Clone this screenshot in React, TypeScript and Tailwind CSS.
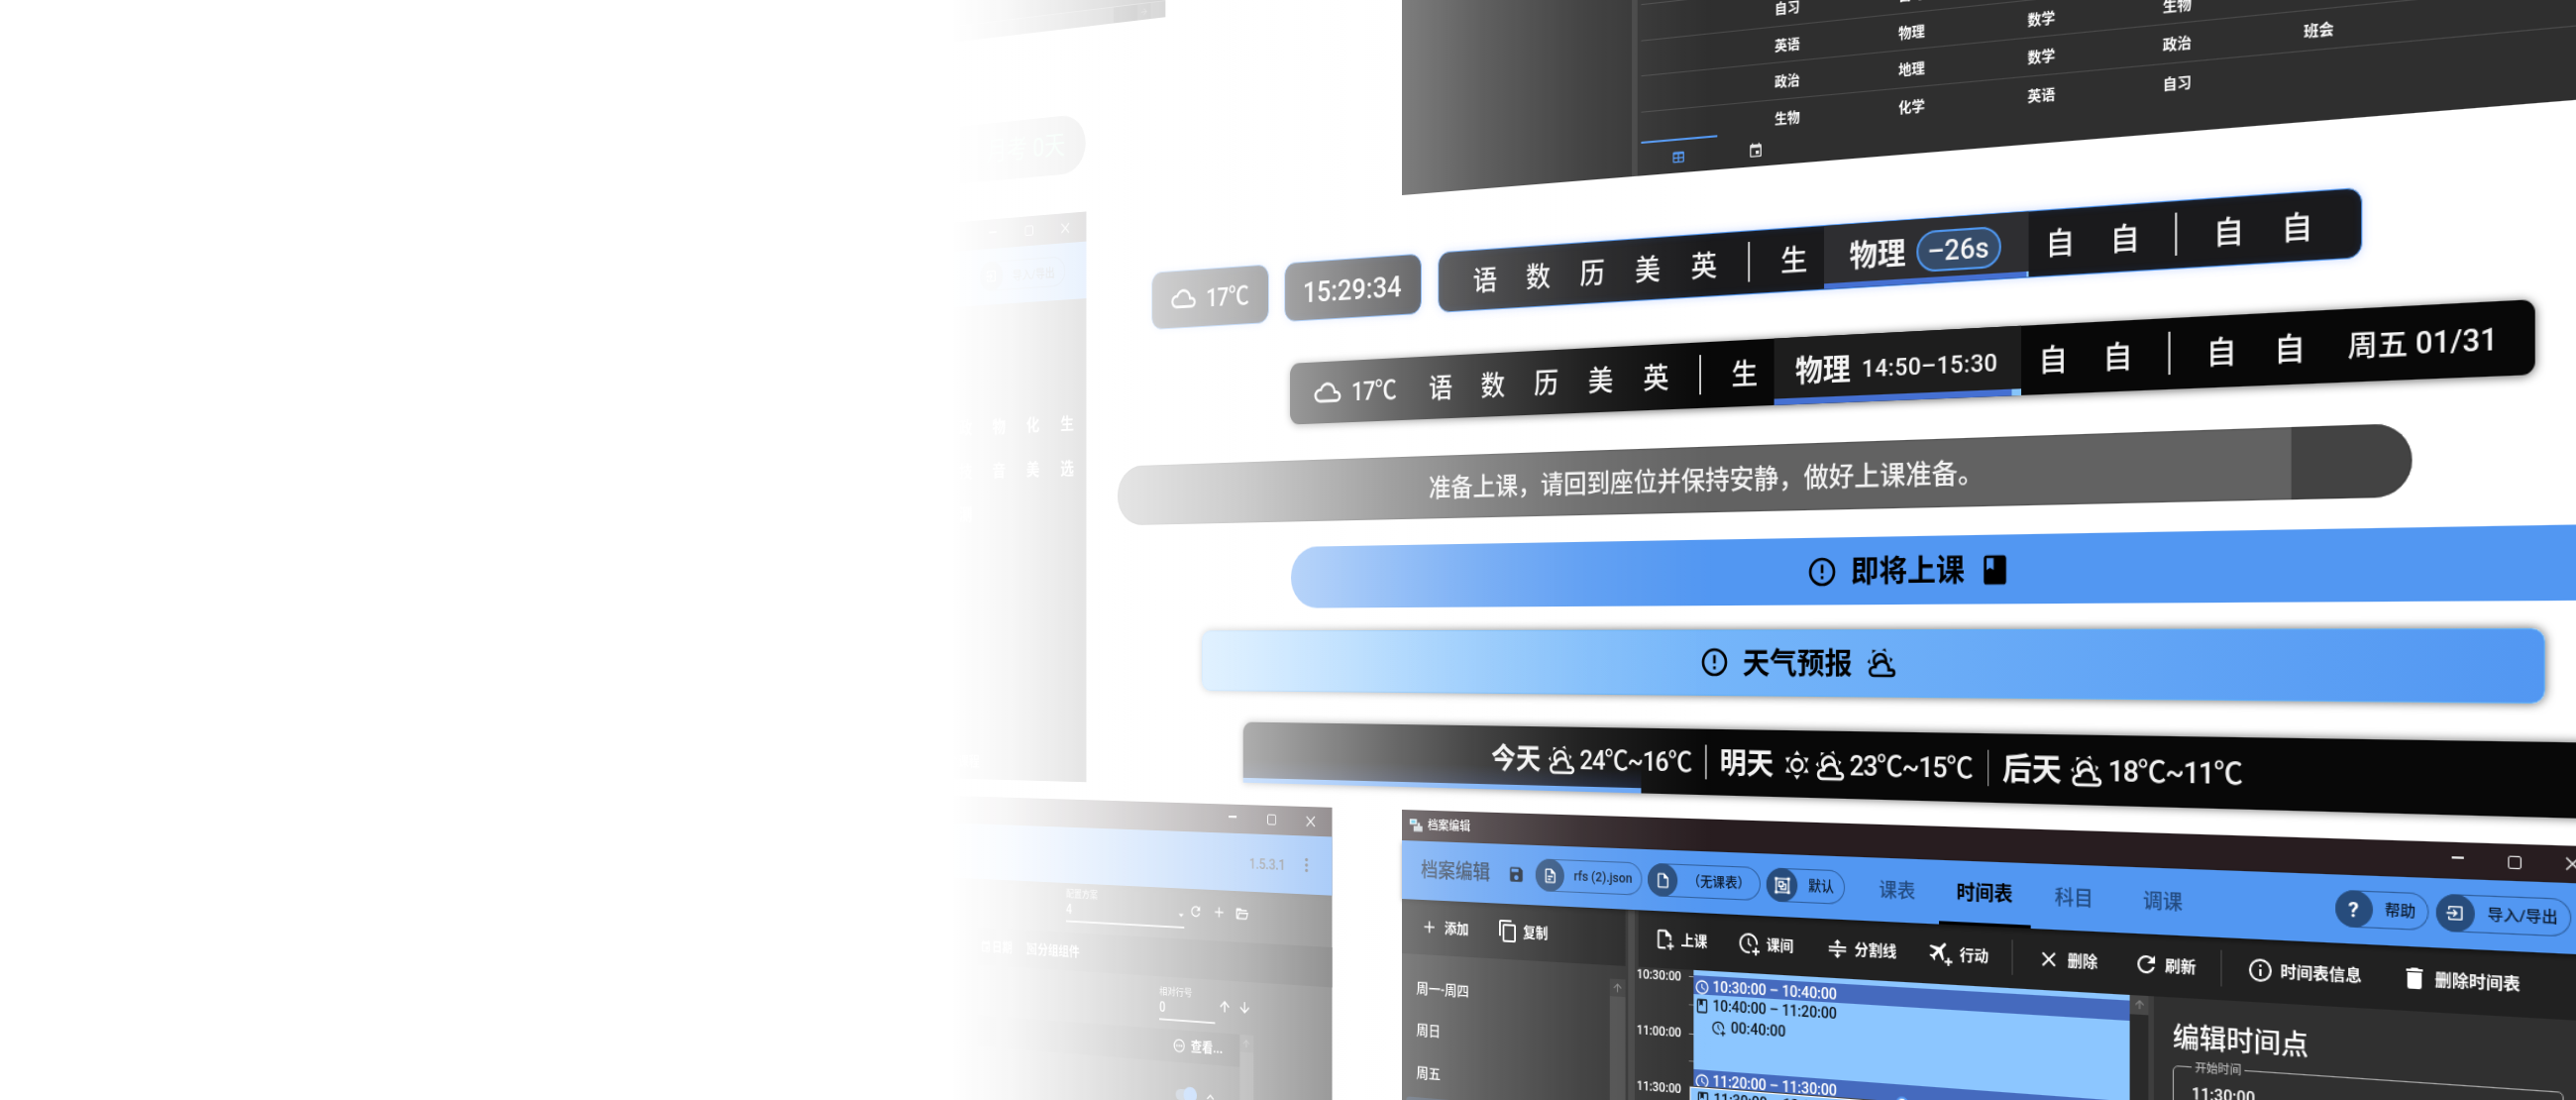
import type { ReactNode } from 'react';

/* ---------- icons ---------- */

const PATHS = {
  cloud:
    'M6,19A5,5 0 0,1 1,14A5,5 0 0,1 6,9C7,6.65 9.3,5 12,5C15.43,5 18.24,7.66 18.5,11.03L19,11A4,4 0 0,1 23,15A4,4 0 0,1 19,19H6M19,13H17V12A5,5 0 0,0 12,7C9.5,7 7.45,8.82 7.06,11.19C6.73,11.07 6.37,11 6,11A3,3 0 0,0 3,14A3,3 0 0,0 6,17H19A2,2 0 0,0 21,15A2,2 0 0,0 19,13Z',
  partly:
    'M12.74,5.47C15.1,6.5 16.35,9.03 15.92,11.46C17.19,12.56 18,14.19 18,16V16.17C18.31,16.06 18.65,16 19,16A3,3 0 0,1 22,19A3,3 0 0,1 19,22H6A4,4 0 0,1 2,18A4,4 0 0,1 6,14H6.27C5,12.45 4.6,10.24 5.5,8.26C6.72,5.5 9.97,4.24 12.74,5.47M11.93,7.3C10.16,6.5 8.09,7.31 7.31,9.07C6.85,10.09 6.93,11.22 7.41,12.13C8.5,10.83 10.16,10 12,10C12.7,10 13.38,10.12 14,10.34C13.94,9.06 13.18,7.86 11.93,7.3M13.55,3.64C13,3.4 12.45,3.23 11.88,3.12L14.37,1.82L15.27,4.71C14.76,4.29 14.19,3.93 13.55,3.64M6.09,4.44C5.6,4.79 5.17,5.19 4.8,5.63L4.91,2.82L7.87,3.5C7.25,3.71 6.65,4.03 6.09,4.44M18,9.71C17.91,9.12 17.78,8.55 17.59,8L19.97,9.5L17.92,11.73C18.03,11.08 18.05,10.4 18,9.71M3.04,11.3C3.11,11.9 3.24,12.47 3.43,13L1.06,11.5L3.1,9.28C3,9.93 2.97,10.61 3.04,11.3M19,18H16V16A4,4 0 0,0 12,12A4,4 0 0,0 8,16H6A2,2 0 0,0 4,18A2,2 0 0,0 6,20H19A1,1 0 0,0 20,19A1,1 0 0,0 19,18Z',
  sunny:
    'M12,7A5,5 0 0,1 17,12A5,5 0 0,1 12,17A5,5 0 0,1 7,12A5,5 0 0,1 12,7M12,9A3,3 0 0,0 9,12A3,3 0 0,0 12,15A3,3 0 0,0 15,12A3,3 0 0,0 12,9M12,2L14.39,5.42C13.65,5.15 12.84,5 12,5C11.16,5 10.35,5.15 9.61,5.42L12,2M3.34,7L7.5,6.65C6.9,7.16 6.36,7.78 5.94,8.5C5.5,9.24 5.25,10 5.11,10.79L3.34,7M3.36,17L5.12,13.23C5.26,14 5.53,14.78 5.95,15.5C6.37,16.24 6.91,16.86 7.5,17.37L3.36,17M20.65,7L18.88,10.79C18.74,10 18.47,9.23 18.05,8.5C17.63,7.78 17.1,7.15 16.5,6.64L20.65,7M20.64,17L16.5,17.36C17.09,16.85 17.62,16.22 18.04,15.5C18.46,14.77 18.73,14 18.87,13.21L20.64,17M12,22L9.59,18.56C10.33,18.83 11.14,19 12,19C12.82,19 13.63,18.83 14.37,18.56L12,22Z',
  alert:
    'M11,15H13V17H11V15M11,7H13V13H11V7M12,2C6.47,2 2,6.5 2,12A10,10 0 0,0 12,22A10,10 0 0,0 22,12A10,10 0 0,0 12,2M12,20A8,8 0 0,1 4,12A8,8 0 0,1 12,4A8,8 0 0,1 20,12A8,8 0 0,1 12,20Z',
  info: 'M11,9H13V7H11M12,20C7.59,20 4,16.41 4,12C4,7.59 7.59,4 12,4C16.41,4 20,7.59 20,12C20,16.41 16.41,20 12,20M12,2A10,10 0 0,0 2,12A10,10 0 0,0 12,22A10,10 0 0,0 22,12A10,10 0 0,0 12,2M11,17H13V11H11V17Z',
  book: 'M18,2H6C4.9,2 4,2.9 4,4V20C4,21.1 4.9,22 6,22H18C19.1,22 20,21.1 20,20V4C20,2.9 19.1,2 18,2M6,4H11V12L8.5,10.5L6,12V4Z',
  bookOutline:
    'M18,2A2,2 0 0,1 20,4V20A2,2 0 0,1 18,22H6A2,2 0 0,1 4,20V4A2,2 0 0,1 6,2H18M18,4H13V12L10.5,9.75L8,12V4H6V20H18V4Z',
  save: 'M15,9H5V5H15M12,19A3,3 0 0,1 9,16A3,3 0 0,1 12,13A3,3 0 0,1 15,16A3,3 0 0,1 12,19M17,3H5C3.89,3 3,3.9 3,5V19A2,2 0 0,0 5,21H19A2,2 0 0,0 21,19V7L17,3Z',
  fileDoc:
    'M6,2A2,2 0 0,0 4,4V20A2,2 0 0,0 6,22H18A2,2 0 0,0 20,20V8L14,2H6M6,4H13V9H18V20H6V4M8,12V14H16V12H8M8,16V18H13V16H8Z',
  file: 'M14,2H6A2,2 0 0,0 4,4V20A2,2 0 0,0 6,22H18A2,2 0 0,0 20,20V8L14,2M18,20H6V4H13V9H18V20Z',
  filePlus:
    'M23 18H20V15H18V18H15V20H18V23H20V20H23M6 2C4.89 2 4 2.9 4 4V20C4 21.11 4.89 22 6 22H13.81C13.45 21.38 13.2 20.7 13.08 20H6V4H13V9H18V13.08C18.33 13.03 18.67 13 19 13C19.34 13 19.67 13.03 20 13.08V8L14 2Z',
  group:
    'M1,1V5H2V19H1V23H5V22H19V23H23V19H22V5H23V1H19V2H5V1M5,4H19V5H20V19H19V20H5V19H4V5H5M6,6V14H9V18H18V9H14V6M8,8H12V12H8M14,11H16V16H11V14H14',
  plus: 'M19,13H13V19H11V13H5V11H11V5H13V11H19V13Z',
  copy: 'M19,21H8V7H19M19,5H8A2,2 0 0,0 6,7V21A2,2 0 0,0 8,23H19A2,2 0 0,0 21,21V7A2,2 0 0,0 19,5M16,1H4A2,2 0 0,0 2,3V17H4V3H16V1Z',
  split: 'M8,18H11V15H2V13H22V15H13V18H16L12,22L8,18M12,2L8,6H11V9H2V11H22V9H13V6H16L12,2Z',
  close:
    'M19,6.41L17.59,5L12,10.59L6.41,5L5,6.41L10.59,12L5,17.59L6.41,19L12,13.41L17.59,19L19,17.59L13.41,12L19,6.41Z',
  refresh:
    'M17.65,6.35C16.2,4.9 14.21,4 12,4A8,8 0 0,0 4,12A8,8 0 0,0 12,20C15.73,20 18.84,17.45 19.73,14H17.65C16.83,16.33 14.61,18 12,18A6,6 0 0,1 6,12A6,6 0 0,1 12,6C13.66,6 15.14,6.69 16.22,7.78L13,11H20V4L17.65,6.35Z',
  trash: 'M19,4H15.5L14.5,3H9.5L8.5,4H5V6H19M6,19A2,2 0 0,0 8,21H16A2,2 0 0,0 18,19V7H6V19Z',
  clock:
    'M12,20A8,8 0 0,0 20,12A8,8 0 0,0 12,4A8,8 0 0,0 4,12A8,8 0 0,0 12,20M12,2A10,10 0 0,1 22,12A10,10 0 0,1 12,22C6.47,22 2,17.5 2,12A10,10 0 0,1 12,2M12.5,7V12.25L17,14.92L16.25,16.15L11,13V7H12.5Z',
  folder:
    'M6.1,10L4,18V8H21A2,2 0 0,0 19,6H12L10,4H4A2,2 0 0,0 2,6V18A2,2 0 0,0 4,20H19C19.9,20 20.7,19.4 20.9,18.5L23.2,10H6.1M19,18H6L7.6,12H20.6L19,18Z',
  calendar:
    'M19,19H5V8H19M16,1V3H8V1H6V3H5C3.89,3 3,3.89 3,5V19A2,2 0 0,0 5,21H19A2,2 0 0,0 21,19V5C21,3.89 20.1,3 19,3H18V1M17,12H12V17H17V12Z',
  table:
    'M5,4H19A2,2 0 0,1 21,6V18A2,2 0 0,1 19,20H5A2,2 0 0,1 3,18V6A2,2 0 0,1 5,4M5,8V12H11V8H5M13,8V12H19V8H13M5,14V18H11V14H5M13,14V18H19V14H13Z',
  up: 'M13,20H11V8L5.5,13.5L4.08,12.08L12,4.16L19.92,12.08L18.5,13.5L13,8V20Z',
  down: 'M11,4H13V16L18.5,10.5L19.92,11.92L12,19.84L4.08,11.92L5.5,10.5L11,16V4Z',
  right: 'M4,11V13H16L10.5,18.5L11.92,19.92L19.84,12L11.92,4.08L10.5,5.5L16,11H4Z',
  dots: 'M12,16A2,2 0 0,1 14,18A2,2 0 0,1 12,20A2,2 0 0,1 10,18A2,2 0 0,1 12,16M12,10A2,2 0 0,1 14,12A2,2 0 0,1 12,14A2,2 0 0,1 10,12A2,2 0 0,1 12,10M12,4A2,2 0 0,1 14,6A2,2 0 0,1 12,8A2,2 0 0,1 10,6A2,2 0 0,1 12,4Z',
  more: 'M12,2A10,10 0 0,0 2,12A10,10 0 0,0 12,22A10,10 0 0,0 22,12A10,10 0 0,0 12,2M12,4A8,8 0 0,1 20,12A8,8 0 0,1 12,20A8,8 0 0,1 4,12A8,8 0 0,1 12,4M6.5,10.7H9.2V13.3H6.5M10.7,10.7H13.3V13.3H10.7M14.8,10.7H17.5V13.3H14.8Z',
  importBox:
    'M5,3H19A2,2 0 0,1 21,5V19A2,2 0 0,1 19,21H5A2,2 0 0,1 3,19V16H5V19H19V5H5V8H3V5A2,2 0 0,1 5,3M1,11H11.2L8.7,8.5L10.1,7.1L15,12L10.1,16.9L8.7,15.5L11.2,13H1Z',
  caret: 'M7,10L12,15L17,10H7Z',
  chevron: 'M7.41,15.41L12,10.83L16.59,15.41L18,14L12,8L6,14L7.41,15.41Z',
};

function Icon({ name, className = '' }: { name: keyof typeof PATHS; className?: string }) {
  return (
    <svg viewBox="0 0 24 24" fill="currentColor" fillRule="evenodd" className={`shrink-0 ${className}`}>
      <path d={PATHS[name]} />
    </svg>
  );
}

function ClockPlus({ className = '' }: { className?: string }) {
  return (
    <svg viewBox="0 0 24 24" fill="none" stroke="currentColor" strokeWidth="2" className={`shrink-0 ${className}`}>
      <path d="M12.5 20A9 9 0 1 1 20 12.2" />
      <path d="M11 6v5.6l3 2.2" strokeWidth="1.6" />
      <path d="M19 15v8M15 19h8" />
    </svg>
  );
}

function PlanePlus({ className = '' }: { className?: string }) {
  return (
    <svg viewBox="0 0 24 24" fill="currentColor" className={`shrink-0 ${className}`}>
      <path
        transform="translate(-2.5 -3) rotate(45 12 12)"
        d="M21 16v-2l-8-5V3.5c0-.83-.67-1.5-1.5-1.5S10 2.67 10 3.5V9l-8 5v2l8-2.5V19l-2 1.5V22l3.5-1 3.5 1v-1.5L13 19v-5.5l8 2.5z"
      />
      <path d="M23 18h-3v-3h-2v3h-3v2h3v3h2v-3h3z" />
    </svg>
  );
}

/* ---------- shared pieces ---------- */

function CaptionButtons({ cell }: { cell: string }) {
  return (
    <div className="flex h-full items-center text-[#e8e8e8]">
      <div className={`flex justify-center ${cell}`}>
        <span className="h-[1.5px] w-[10px] -translate-y-[2px] bg-current" />
      </div>
      <div className={`flex justify-center ${cell}`}>
        <span className="size-[11px] rounded-[2px] border-[1.5px] border-current" />
      </div>
      <div className={`flex justify-center ${cell}`}>
        <svg viewBox="0 0 12 12" className="size-[12px]" stroke="currentColor" strokeWidth="1.4">
          <path d="M1 1L11 11M11 1L1 11" />
        </svg>
      </div>
    </div>
  );
}

function Chip({ icon, width, children }: { icon: ReactNode; width: string; children: ReactNode }) {
  return (
    <div
      className={`flex h-8 shrink-0 items-center rounded-full text-[13px] font-medium text-[#0b1a2e] ring-1 ring-[#2f5f9e] ring-inset ${width}`}
    >
      <span className="flex size-8 shrink-0 items-center justify-center rounded-full bg-[#274c7c] text-white">{icon}</span>
      <span className="flex-1 text-center whitespace-nowrap">{children}</span>
    </div>
  );
}

function Subject({ children }: { children: string }) {
  return <span className="w-[60px] shrink-0 pt-[3px] text-center text-[27.5px] font-medium">{children}</span>;
}

function Rule() {
  return (
    <span className="flex w-[33.5px] shrink-0 justify-center">
      <span className="h-[38px] w-[2px] bg-[#cfcfcf]" />
    </span>
  );
}

function Subjects({ names }: { names: string }) {
  return (
    <>
      {names.split('').map((n, i) => (n === '|' ? <Rule key={i} /> : <Subject key={i}>{n}</Subject>))}
    </>
  );
}

const GLOW =
  'flex items-center bg-[#1a1a1c] text-[#f4f4f4] border-[1.5px] border-[#4f95ee] shadow-[0_0_9px_rgba(90,140,255,0.3),inset_0_0_7px_rgba(40,90,190,0.2)]';

/* ---------- islands ---------- */

function GlowIsland() {
  return (
    <div className="absolute top-[256.5px] left-[691.5px] flex h-[61px] gap-[19px]">
      <div className={`w-[148px] justify-center gap-[11px] rounded-[13px] ${GLOW}`}>
        <Icon name="cloud" className="size-[34px]" />
        <span className="pt-[2px] text-[26px] font-medium tracking-[-0.8px]">17℃</span>
      </div>
      <div className={`w-[164px] justify-center rounded-[13px] pt-[2px] text-[30px] font-medium ${GLOW}`}>15:29:34</div>
      <div className={`w-[917px] overflow-hidden rounded-[13px] pl-[23.5px] ${GLOW}`}>
        <Subjects names="语数历美英|生" />
        <div className="relative flex h-full w-[200px] shrink-0 items-center justify-center gap-[10px] bg-[#2e2e31]">
          <b className="pt-[3px] text-[28px] font-bold">物理</b>
          <span className="mt-[2px] flex h-[38px] w-[82px] items-center justify-center rounded-full border-2 border-[#4f96ee] bg-[#364c69] text-[26px] font-medium">
            –26s
          </span>
          <span className="absolute inset-x-0 bottom-0 h-[5px] border-r-2 border-[#8ac8ff] bg-[#4570d2]" />
        </div>
        <Subjects names="自自|自自" />
      </div>
    </div>
  );
}

function DarkIsland() {
  return (
    <div className="absolute top-[360.5px] left-[866px] flex h-[63px] w-[1236px] items-center rounded-[11px] bg-[#080808] text-[#f4f4f4] shadow-[0_1px_9px_rgba(0,0,0,0.6)]">
      <div className="flex w-[149px] shrink-0 items-center gap-[11px] pl-[28px]">
        <Icon name="cloud" className="size-[35px]" />
        <span className="pt-[2px] text-[26px] font-medium tracking-[-0.8px]">17℃</span>
      </div>
      <Subjects names="语数历美英|生" />
      <div className="relative flex h-full w-[244.5px] shrink-0 items-center justify-center gap-[11px] bg-[#1d1d1d]">
        <b className="pt-[3px] text-[28px] font-bold">物理</b>
        <span className="pt-[4px] text-[22.5px] font-medium tracking-[0.4px]">14:50–15:30</span>
        <span className="absolute inset-x-0 bottom-0 h-[6px] border-r-[9px] border-[#86c4fa] bg-[#4570d2]" />
      </div>
      <Subjects names="自自|自自" />
      <span className="ml-[20px] pt-[3px] text-[25.5px] font-medium whitespace-nowrap">周五 01/31</span>
    </div>
  );
}

function NoticeIsland() {
  return (
    <div className="absolute top-[460.5px] left-[648px] flex h-[63px] w-[1353px] items-center justify-center overflow-hidden rounded-full bg-[linear-gradient(90deg,#626262_92.4%,#434343_92.4%)] pt-[2px] text-[25.5px] font-medium whitespace-nowrap text-[#f2f2f2] shadow-[inset_0_0_2px_#333]">
      准备上课，请回到座位并保持安静，做好上课准备。
    </div>
  );
}

function ClassIsland() {
  return (
    <div className="absolute top-[550px] left-[866.5px] flex h-[63px] w-[1353px] items-center justify-center gap-[13px] rounded-full bg-[#5297f2] text-black">
      <Icon name="alert" className="size-8" />
      <span className="pt-[3px] text-[28px] font-bold">即将上课</span>
      <Icon name="book" className="size-8" />
    </div>
  );
}

function ForecastTitleIsland() {
  return (
    <div className="absolute top-[635.5px] left-[755.5px] flex h-[63px] w-[1354px] items-center justify-center gap-[13px] rounded-[11px] border-[1.5px] border-[#62b0f8] bg-[linear-gradient(90deg,#8fccff,#5297f2)] text-black shadow-[0_0_9px_rgba(0,0,0,0.6)]">
      <Icon name="alert" className="size-8" />
      <span className="pt-[3px] text-[28px] font-bold">天气预报</span>
      <Icon name="partly" className="size-8" />
    </div>
  );
}

function Forecast({ day, icons, range, width }: { day: string; icons: ('sunny' | 'partly')[]; range: string; width: string }) {
  return (
    <div className={`flex shrink-0 items-center pt-[2px] whitespace-nowrap ${width}`}>
      <b className="mr-[7px] text-[28px] font-bold">{day}</b>
      {icons.map((n) => (
        <Icon key={n} name={n} className="mr-px size-[33px]" />
      ))}
      <span className="ml-[2px] text-[26px] font-medium tracking-[-1.1px]">{range}</span>
    </div>
  );
}

function ForecastIsland() {
  return (
    <div className="absolute top-[731px] left-[808px] flex h-[63px] w-[1343px] items-center rounded-t-[11px] rounded-br-[11px] bg-[#080808] bg-[linear-gradient(0deg,rgba(60,100,200,0.25),transparent_24px)] bg-[length:461px_100%] bg-no-repeat pl-[295px] text-[#f2f2f2] shadow-[0_0_9px_rgba(0,0,0,0.6)]">
      <Forecast day="今天" icons={['partly']} range="24℃~16℃" width="w-[234px]" />
      <span className="h-[33px] w-[1.5px] shrink-0 bg-[#a5a5a5]" />
      <Forecast day="明天" icons={['sunny', 'partly']} range="23℃~15℃" width="ml-[14px] w-[268px]" />
      <span className="h-[33px] w-[1.5px] shrink-0 bg-[#a5a5a5]" />
      <Forecast day="后天" icons={['partly']} range="18℃~11℃" width="ml-[13px] w-[234px]" />
      <span className="absolute bottom-0 left-0 h-[5px] w-[461px] bg-[#62a2f6]" />
    </div>
  );
}

/* ---------- windows ---------- */

function ScrollStub() {
  return (
    <div className="absolute top-[-140px] left-[400px] flex h-[128.5px] w-[309.5px] flex-col justify-end bg-[#3a3a3a]">
      <div className="flex h-[18px] border-t-[1.5px] border-[#777] bg-[#484848]">
        <div className="ml-auto w-[31px] bg-[#242424]" />
        <div className="flex w-[17.5px] items-center justify-center bg-[#3a3a3a] text-[#777]">
          <Icon name="right" className="size-[11px]" />
        </div>
        <div className="w-[18.5px] bg-[#505050]" />
      </div>
    </div>
  );
}

function CountdownPill() {
  return (
    <div className="absolute top-[82px] left-[300px] flex h-[63px] w-[306px] items-center justify-end rounded-full bg-[#a0a0a0] pr-[27px] text-[28px] text-[#b5ffd5]">
      月考 0天
    </div>
  );
}

function ScheduleWindow() {
  return (
    <div className="absolute top-[187px] left-[300px] flex h-[611px] w-[306.5px] flex-col bg-[#303030] text-white">
      <div className="flex h-[31.5px] justify-end bg-[#241d20] pr-[3px]">
        <CaptionButtons cell="w-[49px]" />
      </div>
      <div className="flex h-[61.5px] items-center justify-end bg-[#5297f2] pr-[28px]">
        <Chip width="w-[116px]" icon={<Icon name="importBox" className="size-4" />}>
          导入/导出
        </Chip>
      </div>
      <div className="mt-[110px] mr-[2px] grid auto-rows-[47.6px] grid-cols-[repeat(4,46px)] items-center justify-end text-center text-[18px] font-bold">
        {'政物化生技音美选测'.split('').map((c) => (
          <span key={c}>{c}</span>
        ))}
      </div>
      <div className="mt-auto mb-[8px] ml-[118px] text-[15px] font-medium">个课程</div>
    </div>
  );
}

function Field({ label, value, width, caret }: { label: string; value: string; width: string; caret?: boolean }) {
  return (
    <div className={`flex shrink-0 flex-col border-b-2 border-[#ddd] pb-[3px] ${width}`}>
      <span className="text-[10.5px] leading-[14px] font-medium text-[#ccc]">{label}</span>
      <span className="flex items-center justify-between text-[14px] leading-[18px] font-medium">
        {value}
        {caret && <Icon name="caret" className="-mr-[4px] size-4" />}
      </span>
    </div>
  );
}

function SettingsWindow() {
  return (
    <div className="absolute top-[816.5px] left-[400px] flex h-[380px] w-[517px] flex-col bg-[#303030] text-white">
      <div className="flex h-[30.5px] shrink-0 justify-end bg-[#281d20] pr-[2px]">
        <CaptionButtons cell="w-[48px]" />
      </div>
      <div className="flex h-[59.5px] shrink-0 items-center justify-end bg-[#5297f2] pr-[20px] text-[#2b2f36] shadow-md">
        <span className="pt-[2px] text-[15px] font-medium tracking-[-0.3px]">1.5.3.1</span>
        <Icon name="dots" className="ml-[15px] size-[22px]" />
      </div>
      <div className="flex h-[53px] shrink-0 items-center justify-end pr-[96px] pb-[6px]">
        <Field label="配置方案" value="4" width="w-[154px]" caret />
        <span className="flex w-[29px] justify-center">
          <Icon name="refresh" className="size-[17px]" />
        </span>
        <span className="flex w-[29px] justify-center">
          <Icon name="plus" className="size-[18px]" />
        </span>
        <span className="flex w-[29px] justify-center">
          <Icon name="folder" className="size-[17px]" />
        </span>
      </div>
      <div className="flex h-[41px] shrink-0 items-center bg-[#1f1f1f] pl-[64px] text-[14px] font-bold">
        <Icon name="calendar" className="mr-px size-[15px]" />
        日期
        <Icon name="group" className="mr-px ml-[19px] size-[14px]" />
        分组组件
      </div>
      <div className="flex h-[55px] shrink-0 items-center justify-end pr-[98px]">
        <Field label="相对行号" value="0" width="w-[71px]" />
        <Icon name="up" className="ml-[3px] size-[18px]" />
        <Icon name="down" className="ml-[7px] size-[18px]" />
      </div>
      <div className="flex flex-1 pr-[96px]">
        <div className="flex flex-1 flex-col">
          <div className="flex h-[34px] items-center justify-end bg-[#1f1f1f] pr-[21px] text-[14px] font-bold">
            <Icon name="more" className="mr-[6px] size-[17px]" />
            查看...
          </div>
          <div className="flex items-center justify-end pt-[25px] pr-[28px]">
            <span className="flex h-[12px] w-[27px] items-center justify-end rounded-full bg-[#5b7290]">
              <span className="size-[17px] shrink-0 rounded-full bg-[#5297f2]" />
            </span>
            <Icon name="chevron" className="ml-[8px] size-[18px]" />
          </div>
        </div>
        <div className="w-[17.5px] bg-[#4d4d4d] text-[#777]">
          <div className="flex h-[18px] items-center justify-center bg-[#404040]">
            <Icon name="up" className="size-3" />
          </div>
        </div>
      </div>
    </div>
  );
}

const TIMETABLE = [
  [],
  ['自习', '自习'],
  ['英语', '物理', '数学', '生物'],
  ['政治', '地理', '数学', '政治', '班会'],
  ['生物', '化学', '英语', '自习'],
];

function TimetableWindow() {
  return (
    <div className="absolute top-[-2.6px] left-[1000px] flex h-[199.6px] w-[1155px] bg-[#2f2f2f] text-white">
      <div className="w-[259px]" />
      <div className="w-[5.5px] bg-[#424242]" />
      <div className="ml-[4px] flex flex-1 flex-col">
        {TIMETABLE.map((row, i) => (
          <div
            key={i}
            className="flex h-[34.65px] shrink-0 items-center border-b-[1.5px] border-[#4a4a4a] pt-[2px] pl-[141px] text-[13px] font-bold nth-5:h-[28.5px] nth-5:border-0 nth-5:pt-[8px]"
          >
            {row.map((s, j) => (
              <span key={j} className="w-[124.8px]">
                {s}
              </span>
            ))}
          </div>
        ))}
        <div className="flex flex-1">
          <div className="flex w-[81px] items-center justify-center border-t-[2.5px] border-[#5297f2] text-[#5297f2]">
            <Icon name="table" className="size-[16px]" />
          </div>
          <div className="flex w-[81px] items-center justify-center pt-[2px] text-[#e4e4e4]">
            <Icon name="calendar" className="size-[16px]" />
          </div>
        </div>
      </div>
    </div>
  );
}

function Tool({ icon, children }: { icon: ReactNode; children: string }) {
  return (
    <div className="flex shrink-0 items-center gap-[5.5px] px-4 text-[14px] font-bold whitespace-nowrap">
      <span className="flex w-6 justify-center">{icon}</span>
      {children}
    </div>
  );
}

function Span({ icon, dark, children }: { icon: ReactNode; dark?: boolean; children: string }) {
  return (
    <div
      className={`flex h-[21px] items-center gap-[3px] pl-px text-[14.4px] leading-[20px] font-medium tracking-[-0.1px] ${dark ? 'text-white' : 'text-[#101820]'}`}
    >
      {icon}
      {children}
    </div>
  );
}

function ProfileWindow() {
  return (
    <div className="absolute top-[816.7px] left-[1000px] flex h-[380px] w-[1155px] flex-col bg-[#303030] text-white">
      <div className="flex h-[31px] shrink-0 items-center bg-[#281d20] pl-[9px] text-[12.3px] font-medium">
        <svg viewBox="0 0 16 14" className="mr-[6px] h-[13px] w-[15px]">
          <rect x="0" y="0" width="9" height="6" fill="#e8f4f8" />
          <rect x="2" y="1.5" width="5" height="3" fill="#39b9e0" />
          <rect x="5" y="7.5" width="11" height="6" fill="#c9d2d6" />
          <rect x="10" y="4" width="3" height="4" fill="#c9d2d6" />
        </svg>
        档案编辑
        <div className="ml-auto h-full">
          <CaptionButtons cell="w-[46.5px]" />
        </div>
      </div>

      <div className="relative z-10 flex h-[59px] shrink-0 items-center bg-[#5297f2] pl-[22px] shadow-[0_2px_5px_rgba(0,0,0,0.5)]">
        <span className="text-[20px] font-medium text-[#1c2f4a]">档案编辑</span>
        <Icon name="save" className="mr-[12px] ml-[20px] size-[19px] text-[#101c2c]" />
        <div className="flex gap-[6px]">
          <Chip width="w-[117px]" icon={<Icon name="fileDoc" className="size-[17px]" />}>
            rfs (2).json
          </Chip>
          <Chip width="w-[119px]" icon={<Icon name="file" className="size-[17px]" />}>
            （无课表）
          </Chip>
          <Chip width="w-[80px]" icon={<Icon name="group" className="size-[17px]" />}>
            默认
          </Chip>
        </div>
        <div className="ml-[11px] flex h-full items-center text-center text-[18px] font-medium text-[#234b80]">
          <span className="w-[82px]">课表</span>
          <span className="flex h-full w-[88px] items-center justify-center border-b-[3px] border-black pt-[2px] font-bold text-black">
            时间表
          </span>
          <span className="w-[81px]">科目</span>
          <span className="w-[82px]">调课</span>
        </div>
        <div className="mr-[24px] ml-auto flex gap-[6px]">
          <Chip width="w-[79px]" icon={<span className="text-[18px] font-bold">?</span>}>
            帮助
          </Chip>
          <Chip width="w-[110.5px]" icon={<Icon name="importBox" className="size-[16px]" />}>
            导入/导出
          </Chip>
        </div>
      </div>

      <div className="flex min-h-0 flex-1">
        <div className="flex w-[252px] shrink-0 flex-col">
          <div className="flex h-[55px] shrink-0 items-center bg-[#212121] pl-[4px]">
            <Tool icon={<Icon name="plus" className="size-5" />}>添加</Tool>
            <Tool icon={<Icon name="copy" className="size-6" />}>复制</Tool>
          </div>
          <div className="flex flex-1 pt-[13px]">
            <div className="flex flex-1 flex-col text-[14px] leading-[42.4px] font-medium">
              <span className="pl-[17px]">周一-周四</span>
              <span className="pl-[17px]">周日</span>
              <span className="pl-[17px]">周五</span>
              <span className="mt-[4px] ml-[5px] h-[30px] rounded-[4px] bg-[#394658]" />
            </div>
            <div className="w-[17px] bg-[#4a4a4a] text-[#888]">
              <div className="flex h-[17px] items-center justify-center bg-[#3d3d3d]">
                <Icon name="up" className="size-[13px]" />
              </div>
            </div>
          </div>
        </div>
        <div className="mr-[4px] ml-[3px] w-[7px] shrink-0 bg-[#424242]" />

        <div className="flex min-w-0 flex-1 flex-col">
          <div className="flex h-[55px] shrink-0 items-center bg-[#212121]">
            <Tool icon={<Icon name="filePlus" className="size-[22px]" />}>上课</Tool>
            <Tool icon={<ClockPlus className="size-[23px]" />}>课间</Tool>
            <Tool icon={<Icon name="split" className="size-[21px]" />}>分割线</Tool>
            <Tool icon={<PlanePlus className="size-[23px]" />}>行动</Tool>
            <span className="mx-[6px] h-[32px] w-px bg-[#4a4a4a]" />
            <Tool icon={<Icon name="close" className="size-[22px]" />}>删除</Tool>
            <Tool icon={<Icon name="refresh" className="size-[24px]" />}>刷新</Tool>
            <span className="mx-[6px] h-[32px] w-px bg-[#4a4a4a]" />
            <Tool icon={<Icon name="info" className="size-[24px]" />}>时间表信息</Tool>
            <Tool icon={<Icon name="trash" className="size-[24px]" />}>删除时间表</Tool>
          </div>

          <div className="flex min-h-0 flex-1">
            <div className="w-[59px] shrink-0 text-[12.2px] leading-[14px] font-medium">
              {['10:30:00', '11:00:00', '11:30:00'].map((t) => (
                <div key={t} className="h-[54.4px]">
                  <div className="-ml-[2px] flex items-center justify-between">
                    {t}
                    <span className="h-px w-[5px] bg-[#999]" />
                  </div>
                  <span className="mt-[19px] ml-auto block h-px w-[5px] bg-[#777]" />
                </div>
              ))}
            </div>
            <div className="w-[429px] shrink-0 bg-[#8cc6ff]">
              <div className="h-[5.5px]" />
              <div className="h-[18px] bg-[#456abe]">
                <Span dark icon={<Icon name="clock" className="size-[16px]" />}>
                  10:30:00 – 10:40:00
                </Span>
              </div>
              <div className="h-[72px]">
                <Span icon={<Icon name="bookOutline" className="size-[16px]" />}>10:40:00 – 11:20:00</Span>
                <div className="ml-[19px] flex items-center gap-[5px] text-[14.5px] leading-[20px] font-medium text-[#101820]">
                  <ClockPlus className="size-[15px]" />
                  00:40:00
                </div>
              </div>
              <div className="h-[16.5px] overflow-hidden bg-[#456abe]">
                <Span dark icon={<Icon name="clock" className="size-[16px]" />}>
                  11:20:00 – 11:30:00
                </Span>
              </div>
              <div className="relative -ml-[4px] h-[80px] border-[1.5px] border-white bg-[#8cc6ff] pl-[4px] outline outline-[#444]">
                <Span icon={<Icon name="bookOutline" className="size-[16px]" />}>11:30:00 – 12:10:00</Span>
                <span className="absolute -top-[7px] left-1/2 size-[13px] -translate-x-1/2 rounded-full border-2 border-[#5297f2] bg-white" />
              </div>
            </div>
            <div className="w-[17px] shrink-0 bg-[#2a2a2a] text-[#888]">
              <div className="flex h-[17px] items-center justify-center bg-[#484848]">
                <Icon name="up" className="size-[12px]" />
              </div>
            </div>
            <div className="w-[5px] shrink-0 bg-[#3e3e3e]" />
            <div className="flex-1 pt-[17px] pr-[30px] pl-[17px]">
              <h2 className="text-[24px] leading-[36px] font-medium">编辑时间点</h2>
              <fieldset className="mt-px h-[60px] rounded-[5px] border-[1.5px] border-[#a8a8a8] pl-[16px]">
                <legend className="px-[3px] text-[10.3px] leading-[14px] font-medium text-[#b5b5b5]">开始时间</legend>
                <span className="block pt-[6px] text-[14.3px] leading-[20px] font-medium">11:30:00</span>
              </fieldset>
            </div>
          </div>
        </div>
      </div>
    </div>
  );
}

/* ---------- scene ---------- */

export default function App() {
  return (
    <main className="relative h-[1110px] w-[2600px] overflow-hidden bg-white [font-family:Roboto,'Noto_Sans_CJK_SC',sans-serif]">
      <div className="relative h-[1200px] w-[2300px] origin-top-left [transform:matrix3d(0.639944,-0.100464,0,-0.00015552,0,1,0,0,0,0,1,0,775.06,100.466,0,1.15552)]">
        <ScrollStub />
        <CountdownPill />
        <ScheduleWindow />
        <SettingsWindow />
        <TimetableWindow />
        <ProfileWindow />
        <GlowIsland />
        <DarkIsland />
        <NoticeIsland />
        <ClassIsland />
        <ForecastTitleIsland />
        <ForecastIsland />
      </div>
      <div className="pointer-events-none absolute inset-0 bg-[linear-gradient(90deg,#fff_960px,rgba(255,255,255,0.96)_1020px,rgba(255,255,255,0.88)_1095px,rgba(255,255,255,0.8)_1160px,rgba(255,255,255,0.67)_1258px,rgba(255,255,255,0.52)_1340px,rgba(255,255,255,0.38)_1415px,rgba(255,255,255,0.23)_1500px,rgba(255,255,255,0.1)_1600px,rgba(255,255,255,0)_1730px)]" />
    </main>
  );
}
